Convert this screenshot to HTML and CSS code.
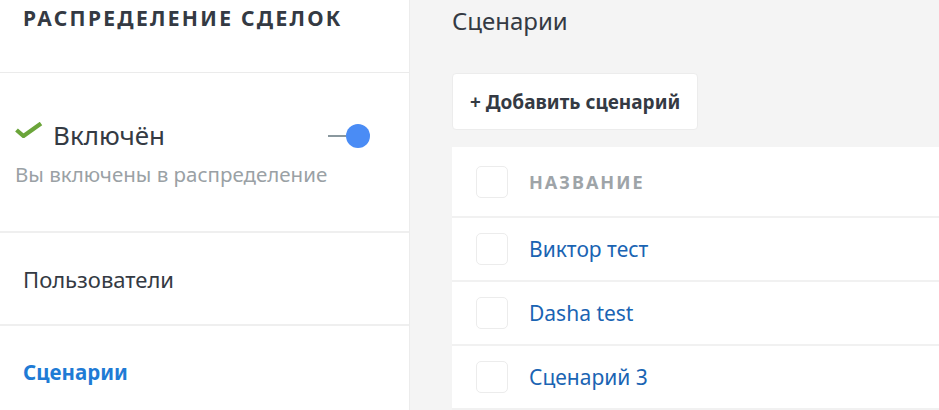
FILE: index.html
```html
<!DOCTYPE html>
<html lang="ru">

<head>
    <meta charset="UTF-8">
    <meta name="viewport" content="width=device-width, initial-scale=1.0">
    <title>Распределение сделок</title>
    <link rel="stylesheet" href="styles.css">
</head>

<body>
    <div class="layout">
        <aside class="sidebar">
            <div class="sidebar-head">
                <h2 class="sidebar-title">Распределение сделок</h2>
            </div>
            <div class="status">
                <div class="status-row">
                    <svg class="check" width="28" height="16" viewBox="0 0 28 16">
                        <polyline points="1.5,8 8.5,14 26,1.5" fill="none" stroke="#6ba53a" stroke-width="4.2" />
                    </svg>
                    <span class="status-label">Включён</span>
                    <span class="switch"><span class="switch-line"></span><span class="switch-knob"></span></span>
                </div>
                <div class="status-note">Вы включены в распределение</div>
            </div>
            <a class="nav-item" href="#">Пользователи</a>
            <a class="nav-item active" href="#">Сценарии</a>
        </aside>

        <main class="main">
            <h1 class="page-title">Сценарии</h1>
            <button class="add-button">+ Добавить сценарий</button>
            <div class="table">
                <div class="table-row table-head">
                    <span class="checkbox"></span>
                    <span class="col-title">Название</span>
                </div>
                <div class="table-row">
                    <span class="checkbox"></span>
                    <a class="row-link" href="#">Виктор тест</a>
                </div>
                <div class="table-row">
                    <span class="checkbox"></span>
                    <a class="row-link" href="#">Dasha test</a>
                </div>
                <div class="table-row">
                    <span class="checkbox"></span>
                    <a class="row-link" href="#">Сценарий 3</a>
                </div>
            </div>
        </main>
    </div>
</body>

</html>
```

FILE: styles.css
```css
body {
    margin: 0;
    font-family: "Noto Sans", "Open Sans", sans-serif;
    color: #343a43;
    overflow: hidden;
}

.layout {
    display: flex;
    height: 410px;
}

.sidebar {
    width: 409px;
    flex-shrink: 0;
    background-color: #fff;
    display: flex;
    flex-direction: column;
}

.sidebar > * {
    flex-shrink: 0;
}

.sidebar-head {
    height: 72px;
    border-bottom: 1px solid #ebebeb;
    padding-left: 23px;
}

.sidebar-title {
    margin: 0;
    padding-top: 3px;
    font-size: 21px;
    line-height: 30px;
    font-weight: bold;
    letter-spacing: 2.3px;
    text-transform: uppercase;
    color: #343a43;
}

.status {
    height: 158px;
    border-bottom: 2px solid #efefef;
    padding: 0 0 0 15px;
}

.status-row {
    display: flex;
    align-items: center;
    margin-top: 44px;
    height: 36px;
}

.check {
    margin-right: 10px;
    margin-bottom: 10px;
}

.status-label {
    font-size: 26px;
    line-height: 36px;
    color: #343a43;
}

.switch {
    margin-left: auto;
    margin-right: 39px;
    display: flex;
    align-items: center;
    margin-top: 2px;
}

.switch-line {
    width: 18px;
    height: 2px;
    background-color: #8a989e;
}

.switch-knob {
    width: 24px;
    height: 24px;
    border-radius: 50%;
    background-color: #4a8cf5;
}

.status-note {
    margin-top: 7px;
    font-size: 20.5px;
    color: #9aa1a5;
}

.nav-item {
    display: flex;
    align-items: center;
    height: 91px;
    padding-left: 23px;
    font-size: 22px;
    color: #343a43;
    text-decoration: none;
    border-bottom: 2px solid #efefef;
}

.nav-item.active {
    border-bottom: none;
    font-weight: bold;
    font-size: 20.5px;
    color: #1f7bd5;
}

.main {
    flex: 1;
    background-color: #f4f4f4;
    padding-left: 42px;
    border-left: 1px solid #ececec;
}

.page-title {
    margin: 0;
    padding-top: 1px;
    font-size: 24px;
    line-height: 40px;
    font-weight: normal;
    color: #343a43;
}

.add-button {
    margin-top: 32px;
    height: 57px;
    padding: 0 17px;
    background-color: #fff;
    border: 1px solid #ececec;
    border-radius: 4px;
    font-family: inherit;
    font-size: 19px;
    font-weight: bold;
    color: #343a43;
}

.table {
    margin-top: 17px;
    background-color: #fff;
}

.table-row {
    display: flex;
    align-items: center;
    height: 62px;
    padding-left: 24px;
    border-bottom: 2px solid #f1f1f1;
}

.table-head {
    height: 69px;
}

.checkbox {
    width: 30px;
    height: 30px;
    border: 1px solid #ececec;
    border-radius: 5px;
    margin-right: 21px;
}

.col-title {
    font-size: 18px;
    font-weight: bold;
    letter-spacing: 2px;
    text-transform: uppercase;
    color: #9ea4a8;
}

.row-link {
    font-size: 21px;
    color: #1a64b3;
    text-decoration: none;
}
```
